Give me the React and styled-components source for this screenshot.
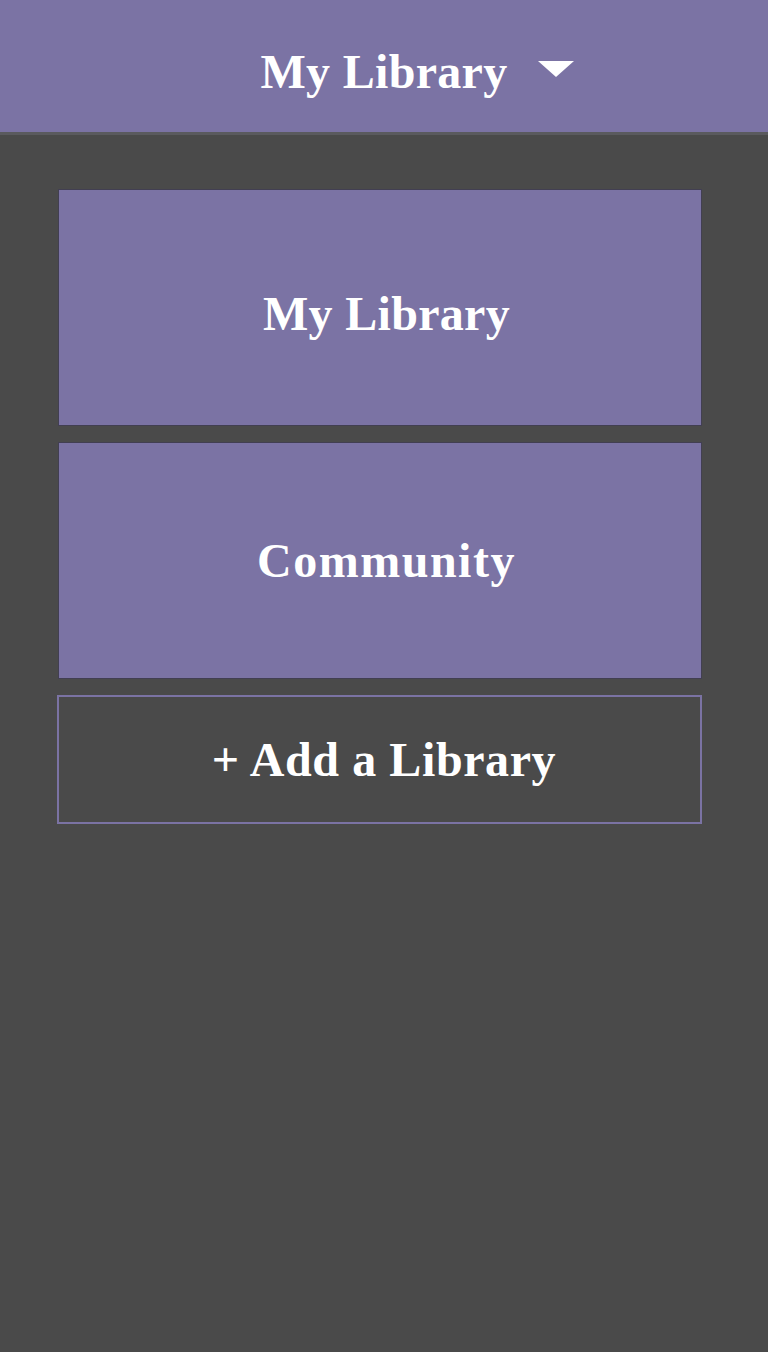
import styled, { createGlobalStyle } from 'styled-components';

const GlobalStyle = createGlobalStyle`
  body {
    margin: 0;
    background: #4a4a4a;
    font-family: "Liberation Serif", "DejaVu Serif", serif;
  }
`;

const Page = styled.div`
  min-height: 1352px;
  background: #4a4a4a;
`;

const Header = styled.header`
  height: 132px;
  background: #7b73a4;
  border-bottom: 3px solid #5a5a5e;
  display: flex;
  align-items: center;
  justify-content: center;
`;

const HeaderTitle = styled.h1`
  position: relative;
  margin: 0;
  padding-top: 10px;
  color: #fff;
  font-size: 48px;
  font-weight: 700;
  letter-spacing: 0.3px;
`;

const Caret = styled.span`
  position: absolute;
  left: calc(100% + 31px);
  top: 50%;
  margin-top: -5px;
  width: 0;
  height: 0;
  border-left: 18px solid transparent;
  border-right: 18px solid transparent;
  border-top: 16px solid #fff;
`;

const List = styled.div`
  display: flex;
  flex-direction: column;
  gap: 16px;
  padding: 54px 66px 0 57px;
`;

const Card = styled.button`
  height: 237px;
  margin: 0 0 0 1px;
  background: #7b73a4;
  border: 1px solid #423f52;
  color: #fff;
  font-family: inherit;
  font-size: 48px;
  font-weight: 700;
  letter-spacing: ${(p) => (p.$wide ? '1.5px' : '0.3px')};
  padding: ${(p) => (p.$lift ? '0 0 0 13px' : '12px 0 0 13px')};
  cursor: pointer;
`;

const AddButton = styled.button`
  height: 129px;
  background: transparent;
  border: 2px solid #7b73a4;
  color: #fff;
  font-family: inherit;
  font-size: 48px;
  font-weight: 700;
  letter-spacing: 0.6px;
  padding: 0 0 0 9px;
  cursor: pointer;
`;

export default function App() {
  const libraries = [
    { name: 'My Library' },
    { name: 'Community', lift: true, wide: true },
  ];
  return (
    <Page>
      <GlobalStyle />
      <Header>
        <HeaderTitle>
          My Library
          <Caret />
        </HeaderTitle>
      </Header>
      <List>
        {libraries.map((lib) => (
          <Card key={lib.name} $lift={lib.lift} $wide={lib.wide}>
            {lib.name}
          </Card>
        ))}
        <AddButton>+ Add a Library</AddButton>
      </List>
    </Page>
  );
}
